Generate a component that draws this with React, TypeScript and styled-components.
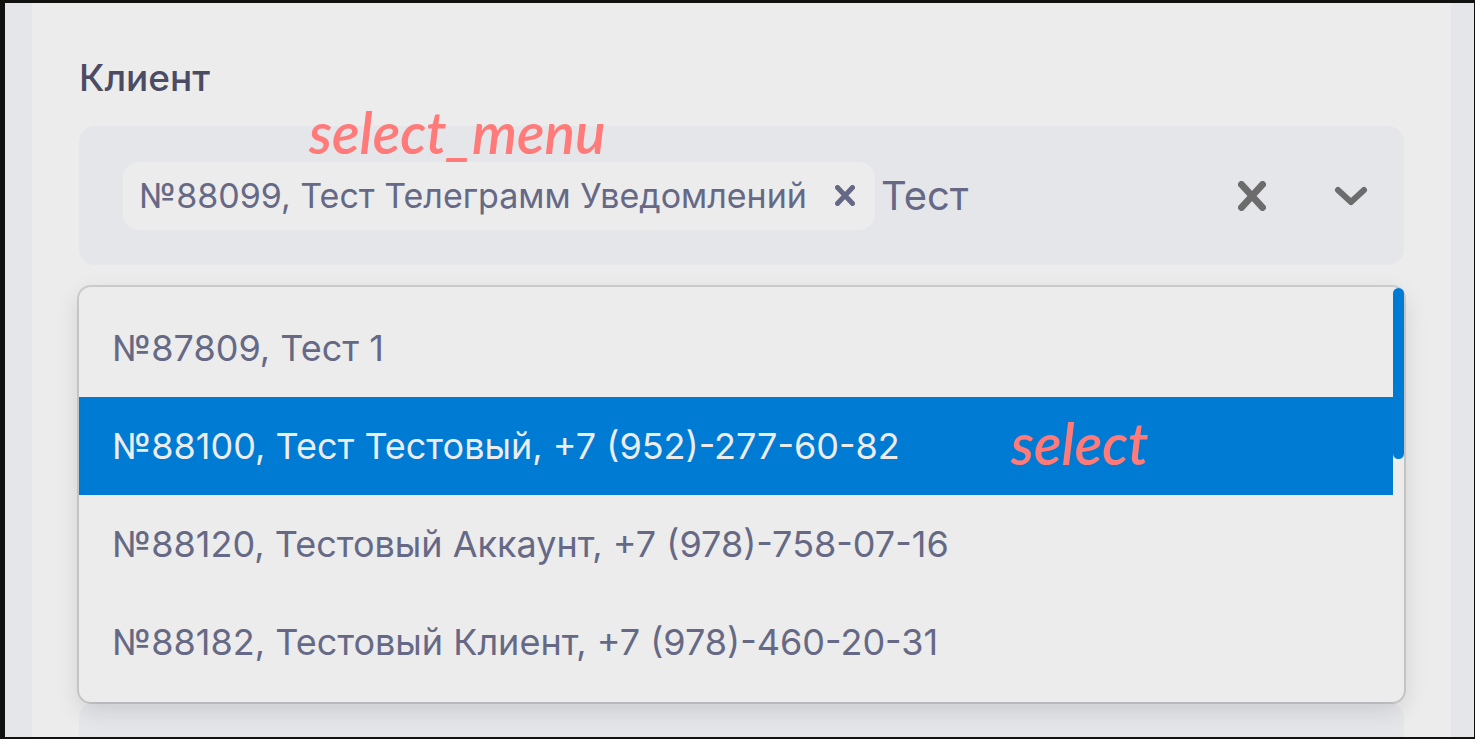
import React, { useState } from "react";
import styled, { createGlobalStyle } from "styled-components";

const GlobalStyle = createGlobalStyle`
  * { box-sizing: border-box; }
  body { margin: 0; background: #11110f; }
`;

const Frame = styled.div`
  height: 100vh;
  padding: 3px 1px 2px 5px;
  overflow: hidden;
  font-family: Inter, "Liberation Sans", sans-serif;
`;

const Page = styled.main`
  height: 100%;
  padding: 0 23px 0 27px;
  overflow: hidden;
  background: #e4e6ea;
`;

const Panel = styled.form`
  min-height: 100%;
  padding: 51px 47px 0;
  background: #ececec;
`;

const Field = styled.div`
  position: relative;
`;

const Label = styled.label`
  display: block;
  margin-bottom: 24px;
  font-size: 37px;
  font-weight: 500;
  line-height: 48px;
  color: #4b4c63;
`;

const Control = styled.div`
  display: flex;
  align-items: center;
  min-height: 139px;
  padding: 35px 36px 35px 44px;
  border-radius: 16px;
  background: #e5e6ea;
`;

const Tag = styled.span`
  display: flex;
  flex: none;
  align-items: center;
  gap: 28px;
  height: 68px;
  padding: 0 20px 0 16px;
  border-radius: 16px;
  background: #ececec;
  font-size: 34px;
  white-space: nowrap;
  color: #666985;
`;

const IconButton = styled.button`
  display: flex;
  flex: none;
  padding: 0;
  border: 0;
  background: none;
  color: inherit;
  cursor: pointer;
`;

const Search = styled.input`
  flex: 1;
  min-width: 0;
  margin-left: 6px;
  padding: 0;
  border: 0;
  outline: 0;
  background: none;
  font: inherit;
  font-size: 40px;
  line-height: 48px;
  color: #666985;
`;

const Indicators = styled.div`
  display: flex;
  align-items: center;
  gap: 68px;
  color: #6c6c6c;
`;

const Menu = styled.div`
  position: relative;
  display: flex;
  margin-top: 22px;
  border-radius: 12px;
  background: #ececec;
  box-shadow: 0 0 0 2px rgba(0, 0, 0, 0.12), 0 8px 24px rgba(0, 0, 0, 0.12);
`;

const Options = styled.ul`
  flex: 1;
  margin: 0;
  padding: 12px 0 11px;
  list-style: none;
`;

const Option = styled.li<{ $active: boolean }>`
  height: 98px;
  padding: 0 33px;
  background: ${(p) => (p.$active ? "#007bd3" : "transparent")};
  font-size: 36px;
  line-height: 98px;
  white-space: nowrap;
  color: ${(p) => (p.$active ? "#ececec" : "#666985")};
  cursor: pointer;
`;

const Scrollbar = styled.div`
  width: 11px;
  padding-top: 1px;
`;

const Thumb = styled.div`
  height: 171px;
  border-radius: 6px;
  background: #007bd3;
`;

const Note = styled.span<{ $left: number; $top: number }>`
  position: absolute;
  z-index: 2;
  left: ${(p) => p.$left}px;
  top: ${(p) => p.$top}px;
  font-family: Lato, sans-serif;
  font-size: 57px;
  font-style: italic;
  font-weight: 600;
  line-height: 64px;
  color: #ff7a78;
  pointer-events: none;
`;

const Cross = ({ width, height, stroke }: { width: number; height: number; stroke: number }) => {
  const inset = stroke / 2;
  const right = width - inset;
  const bottom = height - inset;
  return (
    <svg width={width} height={height} viewBox={`0 0 ${width} ${height}`} aria-hidden="true">
      <path
        d={`M${inset} ${inset}L${right} ${bottom}M${right} ${inset}L${inset} ${bottom}`}
        stroke="currentColor"
        strokeWidth={stroke}
        strokeLinecap="round"
      />
    </svg>
  );
};

const Chevron = () => (
  <svg width="34" height="20" viewBox="0 0 34 20" fill="none" aria-hidden="true">
    <path
      d="M4 4L17 16L30 4"
      stroke="currentColor"
      strokeWidth="6"
      strokeLinecap="round"
      strokeLinejoin="round"
    />
  </svg>
);

const clients = [
  "№87809, Тест 1",
  "№88100, Тест Тестовый, +7 (952)-277-60-82",
  "№88120, Тестовый Аккаунт, +7 (978)-758-07-16",
  "№88182, Тестовый Клиент, +7 (978)-460-20-31",
];

export default function App() {
  const [query, setQuery] = useState("Тест");
  const [active, setActive] = useState(1);

  return (
    <Frame>
      <GlobalStyle />
      <Page>
        <Panel>
          <Field>
            <Label htmlFor="client">Клиент</Label>
            <Control>
              <Tag>
                №88099, Тест Телеграмм Уведомлений
                <IconButton type="button" aria-label="Удалить">
                  <Cross width={20} height={21} stroke={5} />
                </IconButton>
              </Tag>
              <Search
                id="client"
                autoComplete="off"
                value={query}
                onChange={(e) => setQuery(e.target.value)}
              />
              <Indicators>
                <IconButton type="button" aria-label="Очистить">
                  <Cross width={28} height={30} stroke={7} />
                </IconButton>
                <IconButton type="button" aria-label="Открыть список">
                  <Chevron />
                </IconButton>
              </Indicators>
            </Control>
            <Note $left={230} $top={46}>select_menu</Note>
            <Menu>
              <Options role="listbox" aria-label="Клиент">
                {clients.map((client, i) => (
                  <Option
                    key={client}
                    role="option"
                    aria-selected={i === active}
                    $active={i === active}
                    onMouseEnter={() => setActive(i)}
                  >
                    {client}
                  </Option>
                ))}
              </Options>
              <Scrollbar>
                <Thumb />
              </Scrollbar>
              <Note $left={932} $top={124}>select</Note>
            </Menu>
          </Field>
          <Control />
        </Panel>
      </Page>
    </Frame>
  );
}
